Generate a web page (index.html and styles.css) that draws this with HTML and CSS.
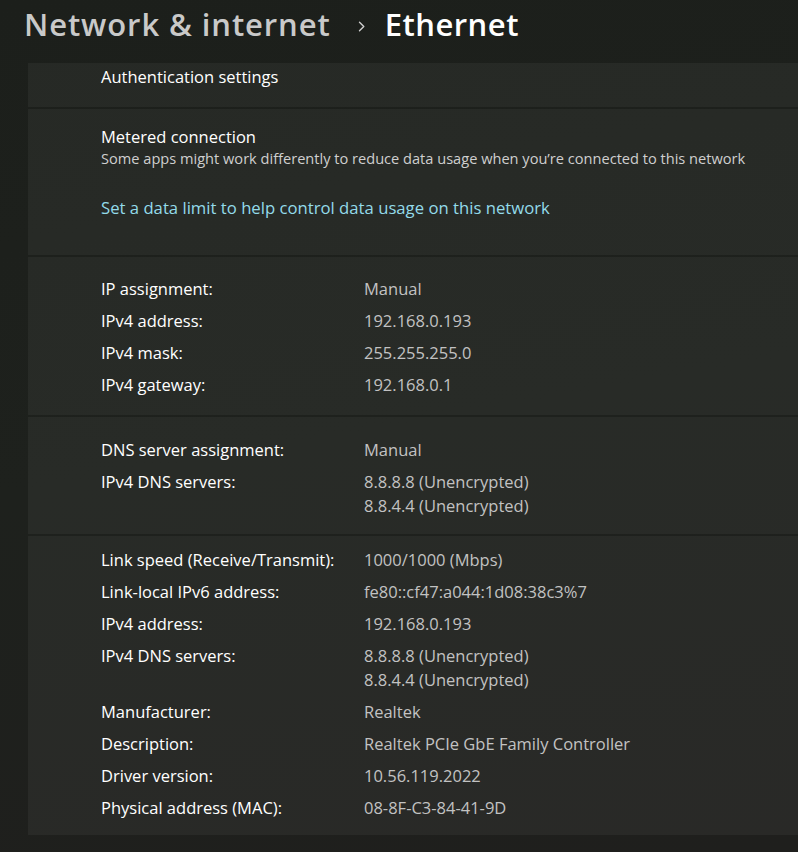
FILE: index.html
```html
<!DOCTYPE html>
<html lang="en">
<head>
<meta charset="utf-8">
<title>Ethernet</title>
<link rel="stylesheet" href="styles.css">
</head>
<body>
<header class="header">
  <span class="crumb">Network &amp; internet</span>
  <span class="chev">
    <svg width="8" height="11" viewBox="0 0 8 11"><path d="M1.5 1.2 L5.8 5.5 L1.5 9.8" fill="none" stroke="#cfcfcf" stroke-width="1.4" stroke-linecap="round" stroke-linejoin="round"/></svg>
  </span>
  <span class="current">Ethernet</span>
</header>
<main class="cards">
  <section class="card card-auth">
    <div class="title">Authentication settings</div>
  </section>
  <section class="card card-metered">
    <div class="title">Metered connection</div>
    <div class="sub">Some apps might work differently to reduce data usage when you’re connected to this network</div>
    <a class="link" href="#">Set a data limit to help control data usage on this network</a>
  </section>
  <section class="card card-ip">
    <div class="row"><div class="label">IP assignment:</div><div class="value">Manual</div></div>
    <div class="row"><div class="label">IPv4 address:</div><div class="value">192.168.0.193</div></div>
    <div class="row"><div class="label">IPv4 mask:</div><div class="value">255.255.255.0</div></div>
    <div class="row"><div class="label">IPv4 gateway:</div><div class="value">192.168.0.1</div></div>
  </section>
  <section class="card card-dns">
    <div class="row"><div class="label">DNS server assignment:</div><div class="value">Manual</div></div>
    <div class="row"><div class="label">IPv4 DNS servers:</div><div class="value">8.8.8.8 (Unencrypted)<br>8.8.4.4 (Unencrypted)</div></div>
  </section>
  <section class="card card-props">
    <div class="row"><div class="label">Link speed (Receive/Transmit):</div><div class="value">1000/1000 (Mbps)</div></div>
    <div class="row"><div class="label">Link-local IPv6 address:</div><div class="value">fe80::cf47:a044:1d08:38c3%7</div></div>
    <div class="row"><div class="label">IPv4 address:</div><div class="value">192.168.0.193</div></div>
    <div class="row"><div class="label">IPv4 DNS servers:</div><div class="value">8.8.8.8 (Unencrypted)<br>8.8.4.4 (Unencrypted)</div></div>
    <div class="row"><div class="label">Manufacturer:</div><div class="value">Realtek</div></div>
    <div class="row"><div class="label">Description:</div><div class="value">Realtek PCIe GbE Family Controller</div></div>
    <div class="row"><div class="label">Driver version:</div><div class="value">10.56.119.2022</div></div>
    <div class="row"><div class="label">Physical address (MAC):</div><div class="value">08-8F-C3-84-41-9D</div></div>
  </section>
</main>
</body>
</html>
```
FILE: styles.css
```css
html, body {
  margin: 0;
  padding: 0;
  height: 100%;
}
body {
  background: linear-gradient(170deg, #1c1f1b 0%, #1e211d 50%, #1f1f1d 100%);
  font-family: "Open Sans", "Noto Sans", sans-serif;
  color: #ffffff;
  overflow: hidden;
}
.header {
  height: 48px;
  padding: 0 0 0 24px;
  display: flex;
  align-items: center;
  font-size: 31px;
  font-weight: 600;
  line-height: 40px;
  letter-spacing: 0.9px;
}
.crumb {
  color: #c9c9c9;
}
.chev {
  display: flex;
  align-items: center;
  margin: 5px 19px 0 27px;
}
.current {
  color: #ffffff;
  letter-spacing: 0.5px;
}
.cards {
  margin: 15px 0 0 28px;
  display: flex;
  flex-direction: column;
  gap: 2px;
}
.card {
  background: rgba(255, 255, 255, 0.048);
  padding-left: 73px;
  font-size: 16.5px;
  line-height: 20px;
}
.card-auth {
  height: 44px;
  box-sizing: border-box;
  padding-top: 4px;
}
.card-metered {
  height: 146px;
  box-sizing: border-box;
  padding-top: 18px;
  display: flex;
  flex-direction: column;
}
.title {
  color: #ffffff;
}
.sub {
  font-size: 14.6px;
  line-height: 16px;
  margin-top: 3px;
  color: #cfcfcf;
}
.link {
  margin-top: 32px;
  font-size: 16.7px;
  color: #93dbea;
  text-decoration: none;
}
.row {
  display: flex;
  padding: 6px 0;
}
.label {
  width: 263px;
  flex: none;
  color: #ffffff;
}
.value {
  color: #c2c2c2;
  line-height: 24px;
  margin-top: -2px;
  margin-bottom: -2px;
}
.card-ip {
  height: 158px;
  box-sizing: border-box;
  padding-top: 16px;
}
.card-dns {
  height: 117px;
  box-sizing: border-box;
  padding-top: 17px;
}
.card-props {
  height: 299px;
  box-sizing: border-box;
  padding-top: 8px;
}
```
